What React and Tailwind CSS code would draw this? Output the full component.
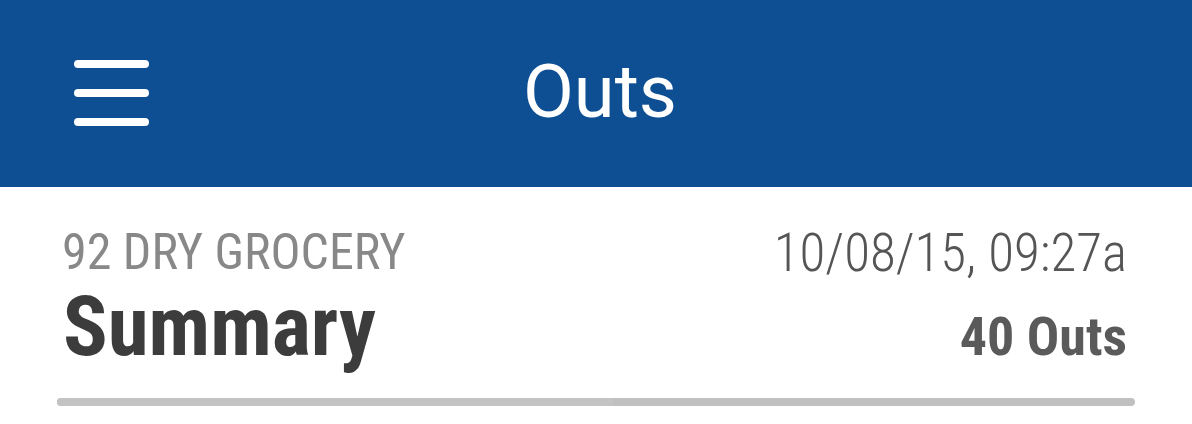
export default function App() {
  return (
    <div className="w-[1192px] h-[424px] bg-white overflow-hidden" style={{ fontFamily: "Roboto, 'Noto Sans', sans-serif" }}>
      <header className="h-[187px] bg-[#0e4e92] flex items-center relative">
        <div className="absolute left-[74px] top-[60px] flex flex-col gap-[21px]">
          <div className="w-[75px] h-[8px] rounded-full bg-white" />
          <div className="w-[75px] h-[8px] rounded-full bg-white" />
          <div className="w-[75px] h-[8px] rounded-full bg-white" />
        </div>
        <h1 className="w-full text-center text-white text-[74px] leading-none font-normal pl-[8px] pb-[4px]">Outs</h1>
      </header>
      <section className="px-[57px] pt-[40px] font-stretch-condensed">
        <div className="flex justify-between items-start pl-[5px] pr-[7px]">
          <div className="text-[50px] leading-none text-[#888888]">92 DRY GROCERY</div>
          <div className="text-[53px] leading-none font-light text-[#555555] pr-[1px]">10/08/15, 09:27a</div>
        </div>
        <div className="mt-[5px] flex justify-between items-baseline pl-[6px] pr-[7px]">
          <div className="text-[83px] leading-none font-bold text-[#3c3c3c]">Summary</div>
          <div className="text-[54px] leading-none font-bold text-[#5a5a5a] pr-[1px]">40 Outs</div>
        </div>
        <div className="mt-[30px] h-[8px] rounded-full bg-[#c0c0c0] flex overflow-hidden">
          <div className="w-[556px] h-full bg-[#c3c3c3]" />
        </div>
      </section>
    </div>
  );
}
